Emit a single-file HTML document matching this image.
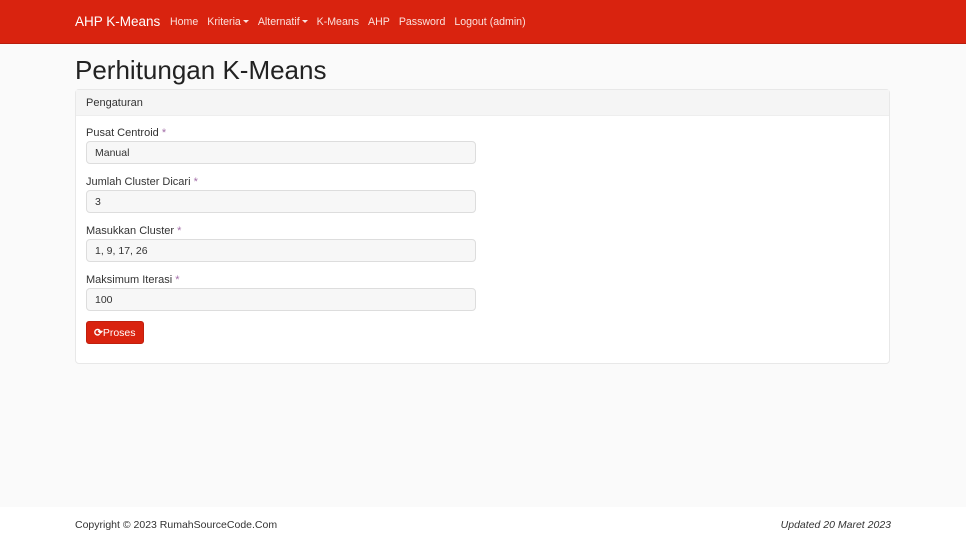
<!DOCTYPE html>
<html><head><meta charset="utf-8"><style>
*{box-sizing:border-box;margin:0;padding:0}
body{width:966px;height:543px;background:#fafafa;font-family:"Liberation Sans",sans-serif;color:#212529;position:relative;overflow:hidden}
.nav{position:absolute;left:0;top:0;width:966px;height:44px;background:#d9230f;border-bottom:1px solid #b81d0c}
.brand{position:absolute;left:75px;top:14px;color:#fff;font-size:13.5px}
.links{position:absolute;left:170px;top:16px;color:#fbe0dc;font-size:10.6px;white-space:nowrap}
.links span{margin-right:9px}
.car{display:inline-block;border-left:3px solid transparent;border-right:3px solid transparent;border-top:3px solid #fbe0dc;vertical-align:2px;margin-left:2px}
h1{position:absolute;left:75px;top:55px;font-weight:300;font-size:26px;color:#222}
.card{position:absolute;left:75px;top:89px;width:815px;height:275px;background:#fff;border:1px solid #e8e8e8;border-radius:4px}
.ch{height:26px;background:#f5f5f5;border-bottom:1px solid #eee;font-size:11px;padding:7px 10px;color:#333}
.lbl{position:absolute;left:10px;font-size:11px;color:#333}
.lbl b{color:#a36fa8;font-weight:normal}
.inp{position:absolute;left:10px;width:390px;height:23px;background:#f7f7f7;border:1px solid #ddd;border-radius:4px;font-size:10.5px;padding:5px 8px;color:#333}
.btn{position:absolute;left:10px;top:231px;width:58px;height:23px;background:#d9230f;border-radius:3px;color:#fff;font-size:10.5px;padding:5px 0 0 7px;border:1px solid #c01f0d}
.foot{position:absolute;left:0;top:507px;width:966px;height:36px;background:#fff;font-size:10.5px;color:#333}
</style></head><body>
<div class="nav"><div class="brand">AHP K-Means</div>
<div class="links"><span>Home</span><span>Kriteria<i class="car"></i></span><span>Alternatif<i class="car"></i></span><span>K-Means</span><span>AHP</span><span>Password</span><span>Logout (admin)</span></div></div>
<h1>Perhitungan K-Means</h1>
<div class="card"><div class="ch">Pengaturan</div>
<div class="lbl" style="top:37px">Pusat Centroid <b>*</b></div><div class="inp" style="top:51px">Manual</div>
<div class="lbl" style="top:86px">Jumlah Cluster Dicari <b>*</b></div><div class="inp" style="top:100px">3</div>
<div class="lbl" style="top:135px">Masukkan Cluster <b>*</b></div><div class="inp" style="top:149px">1, 9, 17, 26</div>
<div class="lbl" style="top:184px">Maksimum Iterasi <b>*</b></div><div class="inp" style="top:198px">100</div>
<div class="btn"><b>⟳</b>Proses</div>
</div>
<div class="foot"><span style="position:absolute;left:75px;top:12px">Copyright © 2023 RumahSourceCode.Com</span><span style="position:absolute;right:75px;top:12px;font-style:italic">Updated 20 Maret 2023</span></div>
</body></html>
